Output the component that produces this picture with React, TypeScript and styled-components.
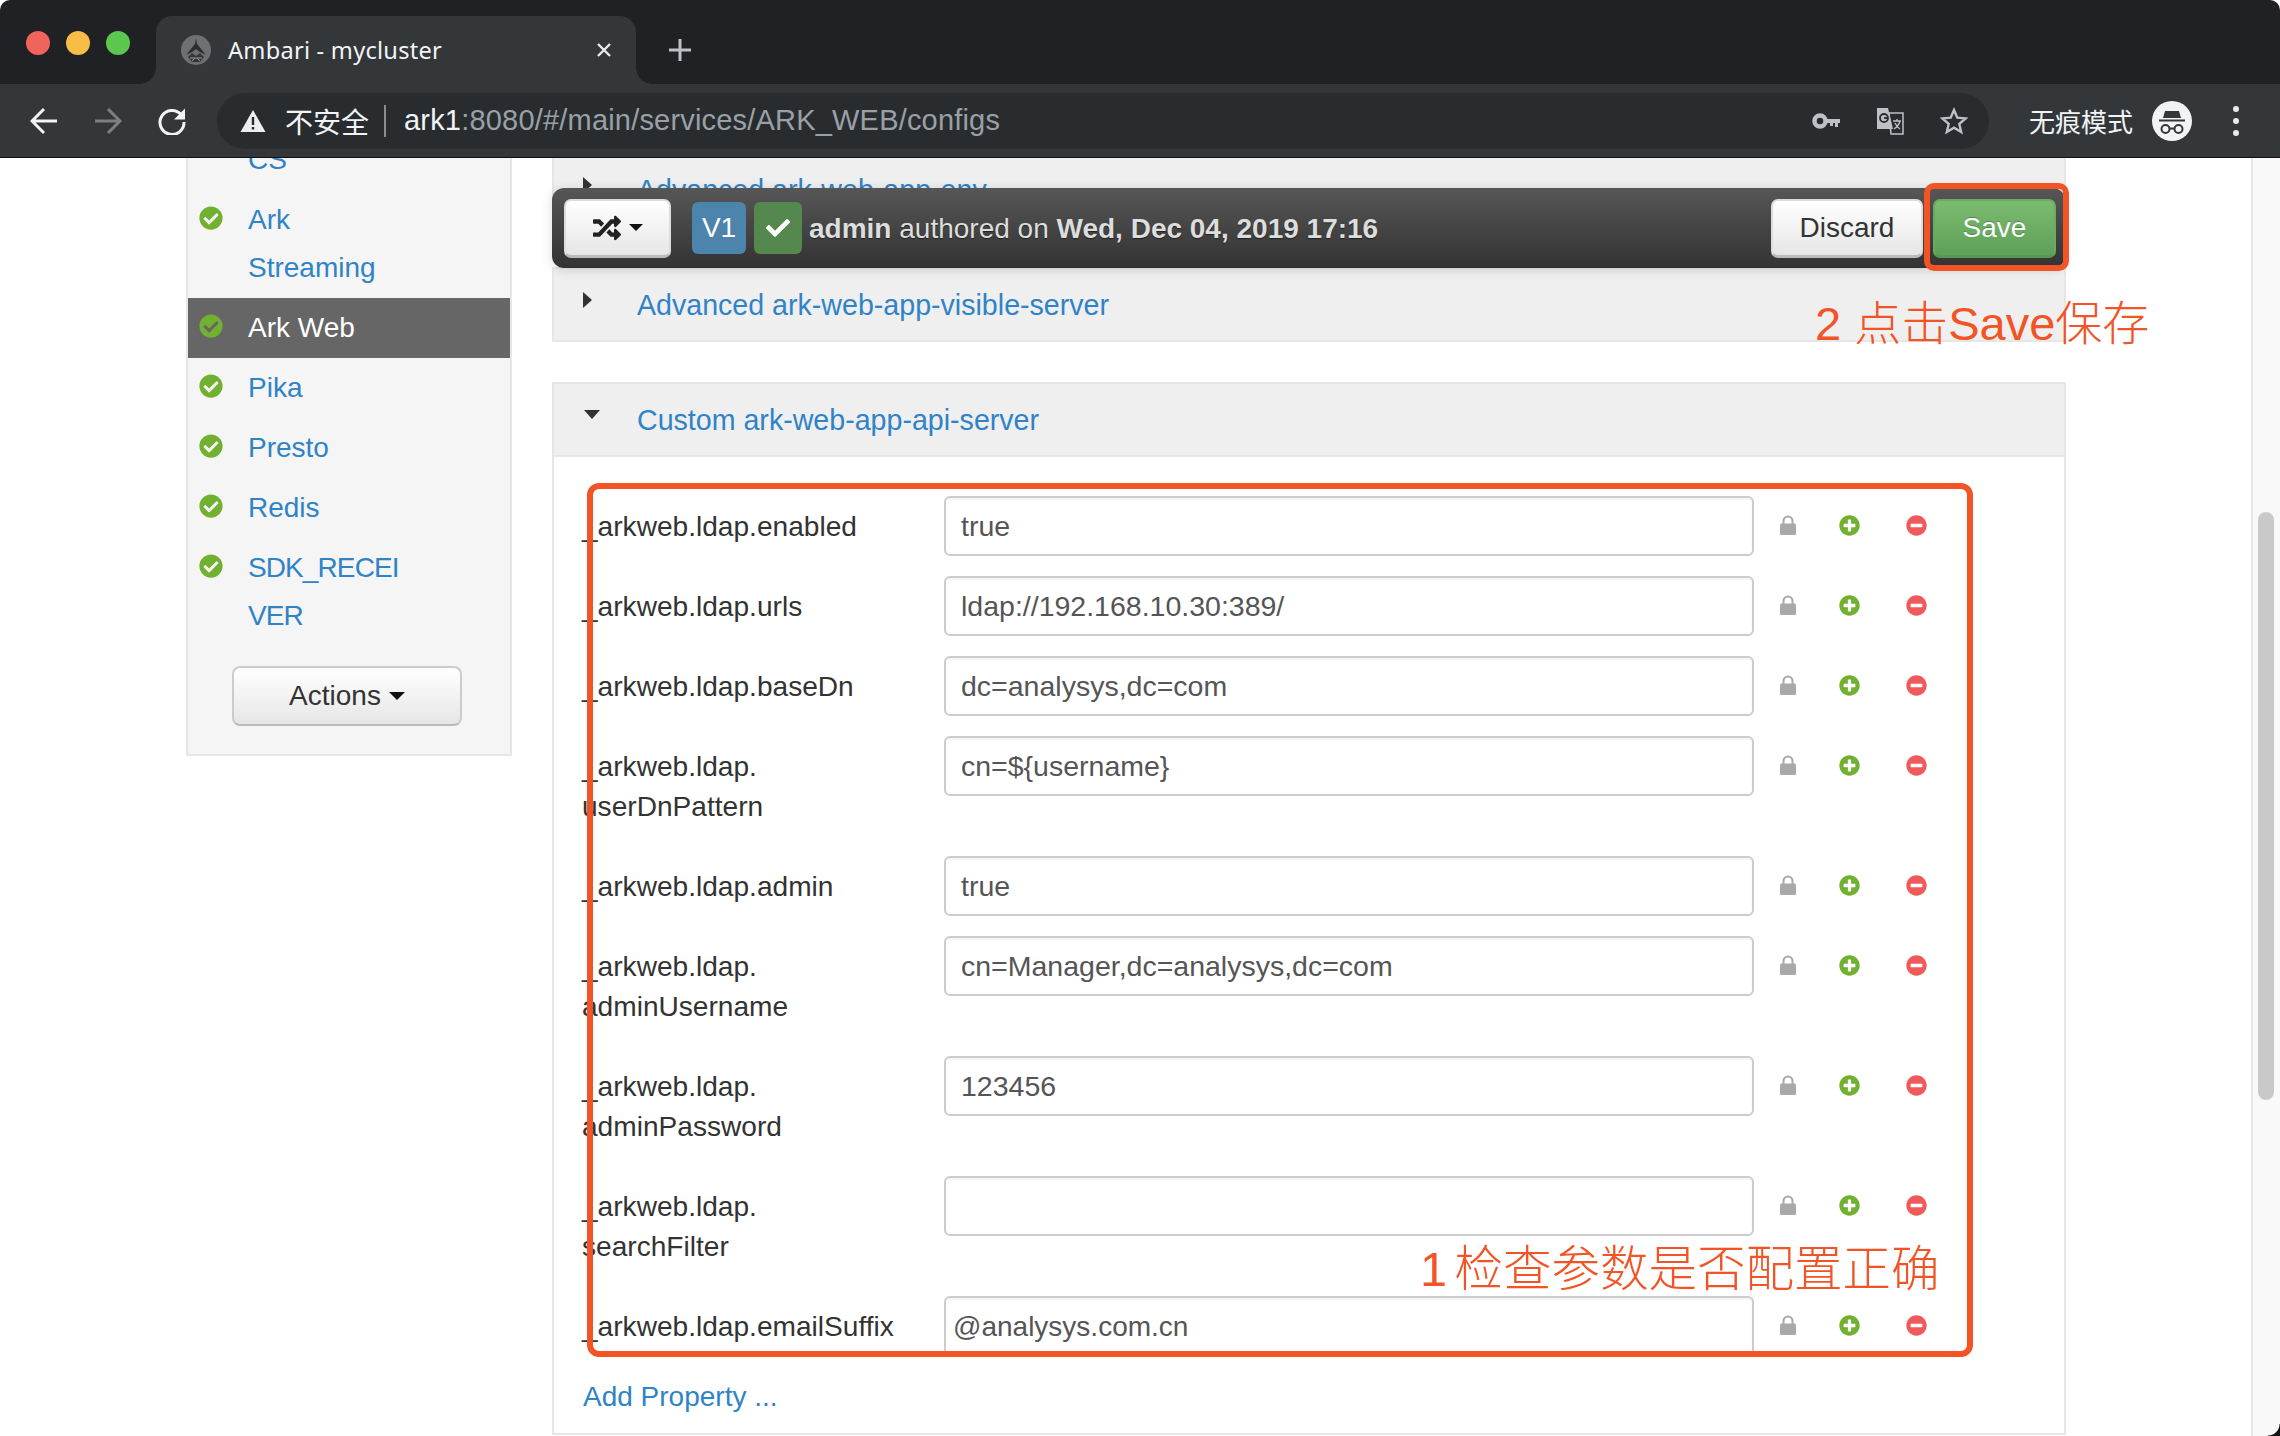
import React from "react";
import styled, { createGlobalStyle } from "styled-components";
import { FaRandom, FaCheck, FaPlusCircle, FaMinusCircle, FaCheckCircle } from "react-icons/fa";

const Global = createGlobalStyle`
  html, body { margin: 0; padding: 0; background: #fff; }
  body { width: 2280px; height: 1436px; overflow: hidden; font-family: "Liberation Sans", "Noto Sans CJK SC", Arial, sans-serif; }
  * { box-sizing: border-box; }
`;

const ACCENT = "#f25426";
const LINK = "#3083c6";
const CJK = `"Liberation Sans", "Noto Sans CJK SC", sans-serif`;

const Window = styled.div`
  position: relative; width: 2280px; height: 1436px; display: flex; flex-direction: column;
  overflow: hidden; border-radius: 10px 10px 0 0; background: #fff;
`;
const BottomCorner = styled.div`
  position: absolute; right: 0; bottom: 0; width: 12px; height: 12px;
  background: radial-gradient(circle at 0 0, transparent 11px, #111 12px);
`;
const TabStrip = styled.div`
  height: 84px; background: #202124; display: flex; align-items: flex-end; flex: none;
`;
const Lights = styled.div`
  width: 156px; height: 84px; padding: 31px 0 0 26px; display: flex; gap: 16px; flex: none;
`;
const Light = styled.span<{ $c: string }>`
  width: 24px; height: 24px; border-radius: 50%; background: ${(p) => p.$c};
`;
const Tab = styled.div`
  position: relative; width: 480px; height: 68px; flex: none; background: #33373a;
  border-radius: 16px 16px 0 0; display: flex; align-items: center; padding: 0 24px 0 25px; color: #f1f3f4;
  &::before, &::after { content: ""; position: absolute; bottom: 0; width: 16px; height: 16px; }
  &::before { left: -16px; background: radial-gradient(circle at 0 0, #202124 15.5px, #33373a 16px); }
  &::after { right: -16px; background: radial-gradient(circle at 100% 0, #202124 15.5px, #33373a 16px); }
`;
const TabTitle = styled.span`
  margin-left: 17px; flex: 1; white-space: nowrap; letter-spacing: 0.25px;
  font-family: "Noto Sans", "Liberation Sans", sans-serif; font-size: 23.6px;
`;
const NewTab = styled.span`
  margin-left: 32px; margin-bottom: 22px; width: 24px; height: 24px; display: flex;
`;
const Toolbar = styled.div`
  height: 74px; flex: none; background: #33373a; border-bottom: 1px solid #111;
  display: flex; align-items: center; padding-left: 12px; color: #fff;
`;
const NavButton = styled.span`
  width: 64px; height: 40px; display: flex; align-items: center; justify-content: center; flex: none;
`;
const Omnibox = styled.div`
  margin-left: 13px; width: 1772px; height: 56px; border-radius: 28px; background: #292c2f; flex: none;
  display: flex; align-items: center; padding-left: 23px; padding-right: 21px;
`;
const Insecure = styled.span`
  font-size: 28px; color: #f1f3f4; margin-left: 19px; font-family: ${CJK}; white-space: nowrap;
`;
const UrlDivider = styled.span`
  width: 2px; height: 32px; background: #8a8d90; margin: 0 18px 0 15px; flex: none;
`;
const Url = styled.span`
  font-size: 29px; color: #9aa0a6; flex: 1; white-space: nowrap; letter-spacing: 0.19px;
`;
const UrlHost = styled.span`color: #f1f3f4;`;
const OmniIcons = styled.div`
  display: flex; align-items: center; gap: 36px;
`;
const Incognito = styled.span`
  font-size: 26px; margin-left: 40px; color: #f1f3f4; white-space: nowrap; font-family: ${CJK}; width: 104px; flex: none;
`;
const IncognitoBadge = styled.span`
  width: 40px; height: 40px; margin-left: 19px; flex: none; display: flex;
`;
const MenuDots = styled.span`
  width: 8px; height: 32px; margin-left: 40px; flex: none; display: flex;
`;

const Page = styled.div`
  flex: 1; min-height: 0; display: flex; overflow: hidden; position: relative;
`;
const PageBody = styled.div`
  flex: 1; min-width: 0; padding-left: 186px; display: flex; gap: 40px; align-items: flex-start;
`;
const Sidebar = styled.aside`
  width: 326px; margin-top: -28px; flex: none; background: #f5f5f5;
  border: 2px solid #e6e6e6; border-top: 0; padding-bottom: 28px;
`;
const ServiceItem = styled.div<{ $active?: boolean }>`
  display: flex; padding: 6px 0 6px 11px; gap: 25px;
  background: ${(p) => (p.$active ? "#666" : "transparent")};
`;
const StatusIcon = styled.span`
  flex: none; margin-top: 10px; height: 24px; display: flex; color: #72b02f;
`;
const ServiceName = styled.a<{ $active?: boolean; $tight?: boolean }>`
  font-size: 28px; line-height: 48px; color: ${(p) => (p.$active ? "#fff" : LINK)};
  letter-spacing: ${(p) => (p.$tight ? "-0.9px" : "0")};
`;
const ActionsButton = styled.div`
  margin: 20px 0 0 44px; width: 230px; height: 60px; border: 2px solid #ccc; border-bottom-color: #bbb;
  border-radius: 8px; background: linear-gradient(#fff, #e6e6e6); font-size: 28px; color: #333;
  display: flex; align-items: center; justify-content: center; gap: 8px;
`;
const Caret = styled.span<{ $s?: number }>`
  width: 0; height: 0; border-left: ${(p) => p.$s ?? 8}px solid transparent; border-right: ${(p) => p.$s ?? 8}px solid transparent;
  border-top: ${(p) => p.$s ?? 8}px solid #111;
`;

const Main = styled.main`
  width: 1514px; margin-top: -6px; flex: none; display: flex; flex-direction: column; gap: 40px;
`;
const Panel = styled.section`
  border: 2px solid #e6e6e6; background: #fff;
`;
const PanelHeader = styled.div`
  height: 71px; background: #efefef; display: flex; align-items: center; padding: 2px 0 0 29px;
`;
const PanelHeaderOpen = styled(PanelHeader)`
  border-bottom: 2px solid #e6e6e6; height: 73px;
`;
const ArrowSlot = styled.span`
  width: 54px; flex: none; display: flex; align-items: center; height: 24px; margin-top: -12px;
`;
const ArrowRight = styled.span`
  width: 0; height: 0; border-top: 8px solid transparent; border-bottom: 8px solid transparent; border-left: 9px solid #333;
`;
const ArrowDown = styled.span`
  width: 0; height: 0; border-left: 8px solid transparent; border-right: 8px solid transparent; border-top: 9px solid #333; margin-left: 1px;
`;
const PanelTitle = styled.a`
  font-size: 28.6px; color: ${LINK}; white-space: nowrap;
`;
const PanelBody = styled.div`
  padding: 39px 0 16px 29px; display: flex; flex-direction: column;
`;
const PropertyRow = styled.div`
  display: flex; margin-bottom: 20px; min-height: 60px;
`;
const LastRow = styled(PropertyRow)`
  margin-bottom: 21px;
`;
const PropertyName = styled.label`
  width: 361px; flex: none; font-size: 28.1px; line-height: 40px; color: #333; padding: 11px 0 9px; margin-left: -1px; margin-right: 1px;
`;
const FieldBox = styled.div`
  width: 810px; height: 60px; flex: none; border: 2px solid #ccc; border-radius: 6px; background: #fff;
  box-shadow: inset 0 2px 2px rgba(0,0,0,.05); font-size: 28.5px; color: #555; display: flex; align-items: center; padding: 1px 0 0 15px;
`;
const ClippedField = styled(FieldBox)`
  height: 56px; border-bottom: 0; border-radius: 6px 6px 0 0; padding: 4px 0 0 7px; font-size: 28px;
`;
const RowActions = styled.div`
  display: flex; align-items: center; height: 58px; margin-left: 26px;
`;
const LockIcon = styled.span`
  display: flex; width: 16px; justify-content: center;
`;
const AddIcon = styled.span`
  display: flex; color: #72b02f; margin: 0 46px 0 43px;
`;
const RemoveIcon = styled.span`
  display: flex; color: #ef5b5b;
`;
const AddProperty = styled.a`
  font-size: 28px; line-height: 40px; color: ${LINK};
`;

const ConfigBar = styled.div`
  position: absolute; left: 552px; top: 30px; width: 1513px; height: 80px; border-radius: 12px;
  background: linear-gradient(#565656, #333); box-shadow: 0 2px 12px rgba(0,0,0,.14);
  display: flex; align-items: center; padding: 0 9px 0 12px;
`;
const BarButton = styled.div`
  height: 59px; border: 2px solid #ddd; border-bottom: 3px solid #bbb; border-radius: 7px;
  background: linear-gradient(#fff, #e6e6e6); color: #333; font-size: 28px;
  display: flex; align-items: center; justify-content: center; flex: none;
`;
const ShuffleButton = styled(BarButton)`
  width: 107px; gap: 8px; color: #222;
`;
const DiscardButton = styled(BarButton)`
  width: 152px; margin-left: auto;
`;
const SaveButton = styled(BarButton)`
  width: 123px; margin-left: 10px; color: #fff; border: 2px solid #6bab60; border-bottom: 3px solid #5c9554;
  background: linear-gradient(#7cbc71, #5da057); text-shadow: 0 -1px 0 rgba(0,0,0,.25);
`;
const VersionTag = styled.span`
  width: 54px; height: 52px; margin-left: 21px; border-radius: 6px; background: #4d84ac; color: #fff;
  font-size: 28px; display: flex; align-items: center; justify-content: center; flex: none;
`;
const CurrentTag = styled.span`
  width: 48px; height: 52px; margin-left: 8px; border-radius: 6px; background: #55884f; color: #fff;
  display: flex; align-items: center; justify-content: center; flex: none;
`;
const Authored = styled.span`
  margin: 1px 0 0 7px; font-size: 28px; color: #ddd; white-space: nowrap; text-shadow: 0 1px 1px rgba(0,0,0,.5);
`;
const SaveHighlight = styled.div`
  position: absolute; left: 1924px; top: 183px; width: 145px; height: 88px; border: 6px solid ${ACCENT}; border-radius: 10px; pointer-events: none;
`;
const ParamHighlight = styled.div`
  position: absolute; left: 587px; top: 483px; width: 1386px; height: 874px; border: 6px solid ${ACCENT}; border-radius: 12px; pointer-events: none;
`;
const SaveNote = styled.div`
  position: absolute; left: 1815px; top: 296px; font-size: 47px; line-height: 56px; color: ${ACCENT};
  font-family: ${CJK}; font-weight: 300; white-space: nowrap;
`;
const ParamNote = styled.div`
  position: absolute; left: 1420px; top: 1240px; font-size: 48.5px; line-height: 58px; color: ${ACCENT};
  font-family: ${CJK}; font-weight: 300; white-space: nowrap; word-spacing: -6px;
`;
const ScrollTrack = styled.div`
  width: 29px; flex: none; background: #f9f9f9; border-left: 2px solid #e8e8e8; padding: 354px 6px 0 5px;
`;
const ScrollThumb = styled.div`
  height: 588px; background: #c9c9c9; border-radius: 8px;
`;

const AmbariLogo = () => (
  <svg width="30" height="30" viewBox="0 0 30 30" style={{ flex: "none" }}>
    <circle cx="15" cy="15" r="15" fill="#6f7072" />
    <path d="M15 3l1 6 9 11-6-3-4-3-4 3-6 3 9-11z" fill="#2c2d2f" />
    <path d="M7 22l4-4 4 3 4-3 4 4-4 5h-8z" fill="#35363a" />
    <path d="M9 23h12M11 26l3-3M19 26l-3-3" stroke="#9a9b9d" strokeWidth="1" fill="none" />
  </svg>
);
const CloseGlyph = () => (
  <svg width="16" height="16" viewBox="0 0 16 16"><path d="M2 2l12 12M14 2L2 14" stroke="#e8eaed" strokeWidth="2.4" /></svg>
);
const PlusGlyph = () => (
  <svg width="24" height="24" viewBox="0 0 24 24"><path d="M12 1v22M1 12h22" stroke="#bdc1c6" strokeWidth="3" /></svg>
);
const BackGlyph = () => (
  <svg width="28" height="28" viewBox="0 0 28 28" fill="none" stroke="#f1f3f4" strokeWidth="3"><path d="M27 14H3M14 2L2 14l12 12" /></svg>
);
const ForwardGlyph = () => (
  <svg width="28" height="28" viewBox="0 0 28 28" fill="none" stroke="#7d8083" strokeWidth="3"><path d="M1 14h24M14 2l12 12-12 12" /></svg>
);
const ReloadGlyph = () => (
  <svg width="28" height="28" viewBox="0 0 28 28" fill="none">
    <path d="M23 7.5A12 12 0 1 0 26 15" stroke="#f1f3f4" strokeWidth="3" />
    <path d="M27 1.500v11H16z" fill="#f1f3f4" />
  </svg>
);
const WarnGlyph = () => (
  <svg width="26" height="24" viewBox="0 0 26 24" style={{ flex: "none" }}>
    <path d="M13 1l12.500 22H.5z" fill="#eceeef" />
    <path d="M11.800 8h2.400v8h-2.400zM11.800 18h2.400v2.500h-2.400z" fill="#292c2f" />
  </svg>
);
const KeyGlyph = () => (
  <svg width="28" height="16" viewBox="0 0 28 16">
    <circle cx="8" cy="8" r="5.500" fill="none" stroke="#bdc1c6" strokeWidth="4.500" />
    <path d="M14 6h14v4h-2v4h-3v-4h-2v3h-3v-3h-4z" fill="#bdc1c6" />
  </svg>
);
const TranslateGlyph = () => (
  <svg width="28" height="28" viewBox="0 0 28 28">
    <path d="M13 6h14v21H15z" fill="#292c2f" stroke="#bdc1c6" strokeWidth="1.500" />
    <path d="M1 1h11l5 21H1z" fill="#bdc1c6" />
    <circle cx="8" cy="11" r="4" fill="none" stroke="#292c2f" strokeWidth="1.800" />
    <path d="M8 11h4" stroke="#292c2f" strokeWidth="1.800" />
    <path d="M17 14h8M21 12v2M24 14c-1 4-3 6-6 8M19 16c1 2 3 5 5 6" fill="none" stroke="#bdc1c6" strokeWidth="1.300" />
  </svg>
);
const StarGlyph = () => (
  <svg width="28" height="28" viewBox="0 0 28 28">
    <path d="M14 3l3.300 7.700 8.300.7-6.300 5.500 1.900 8.100L14 20.700 6.800 25l1.900-8.100L2.400 11.400l8.300-.7z" fill="none" stroke="#bdc1c6" strokeWidth="2.400" />
  </svg>
);
const IncognitoGlyph = () => (
  <svg width="40" height="40" viewBox="0 0 40 40">
    <circle cx="20" cy="20" r="20" fill="#f1f3f4" />
    <path d="M13 10h14l2 7H11z" fill="#35363a" />
    <path d="M7 18.500h26v2H7z" fill="#35363a" />
    <circle cx="13.500" cy="28" r="4" fill="none" stroke="#35363a" strokeWidth="2" />
    <circle cx="26.500" cy="28" r="4" fill="none" stroke="#35363a" strokeWidth="2" />
    <path d="M17.500 27.500h5" stroke="#35363a" strokeWidth="2" />
  </svg>
);
const DotsGlyph = () => (
  <svg width="8" height="32" viewBox="0 0 8 32">
    <circle cx="4" cy="4" r="3" fill="#e8eaed" />
    <circle cx="4" cy="16" r="3" fill="#e8eaed" />
    <circle cx="4" cy="28" r="3" fill="#e8eaed" />
  </svg>
);
const LockGlyph = () => (
  <svg width="16" height="20" viewBox="0 0 16 20">
    <path d="M3.500 10V6a4.500 4.500 0 0 1 9 0v4" fill="none" stroke="#a9a9a9" strokeWidth="2" />
    <rect x="0" y="8.500" width="16" height="11.500" rx="1.500" fill="#a9a9a9" />
  </svg>
);

const services: { lines: string[]; active?: boolean; noIcon?: boolean; tight?: boolean }[] = [
  { lines: ["CS"], noIcon: true },
  { lines: ["Ark", "Streaming"] },
  { lines: ["Ark Web"], active: true },
  { lines: ["Pika"] },
  { lines: ["Presto"] },
  { lines: ["Redis"] },
  { lines: ["SDK_RECEI", "VER"], tight: true },
];

const properties: { name: string[]; value: string }[] = [
  { name: ["_arkweb.ldap.enabled"], value: "true" },
  { name: ["_arkweb.ldap.urls"], value: "ldap://192.168.10.30:389/" },
  { name: ["_arkweb.ldap.baseDn"], value: "dc=analysys,dc=com" },
  { name: ["_arkweb.ldap.", "userDnPattern"], value: "cn=${username}" },
  { name: ["_arkweb.ldap.admin"], value: "true" },
  { name: ["_arkweb.ldap.", "adminUsername"], value: "cn=Manager,dc=analysys,dc=com" },
  { name: ["_arkweb.ldap.", "adminPassword"], value: "123456" },
  { name: ["_arkweb.ldap.", "searchFilter"], value: "" },
];

const Lines = ({ lines }: { lines: string[] }) => (
  <>
    {lines.map((l, i) => (
      <React.Fragment key={l}>
        {i > 0 && <br />}
        {l}
      </React.Fragment>
    ))}
  </>
);

const Actions = () => (
  <RowActions>
    <LockIcon><LockGlyph /></LockIcon>
    <AddIcon><FaPlusCircle size={21} /></AddIcon>
    <RemoveIcon><FaMinusCircle size={21} /></RemoveIcon>
  </RowActions>
);

export default function App() {
  return (
    <Window>
      <Global />
      <TabStrip>
        <Lights>
          <Light $c="#f1645c" />
          <Light $c="#f8bd47" />
          <Light $c="#5cc74f" />
        </Lights>
        <Tab>
          <AmbariLogo />
          <TabTitle>Ambari - mycluster</TabTitle>
          <CloseGlyph />
        </Tab>
        <NewTab><PlusGlyph /></NewTab>
      </TabStrip>
      <Toolbar>
        <NavButton><BackGlyph /></NavButton>
        <NavButton><ForwardGlyph /></NavButton>
        <NavButton><ReloadGlyph /></NavButton>
        <Omnibox>
          <WarnGlyph />
          <Insecure>不安全</Insecure>
          <UrlDivider />
          <Url><UrlHost>ark1</UrlHost>:8080/#/main/services/ARK_WEB/configs</Url>
          <OmniIcons>
            <KeyGlyph />
            <TranslateGlyph />
            <StarGlyph />
          </OmniIcons>
        </Omnibox>
        <Incognito>无痕模式</Incognito>
        <IncognitoBadge><IncognitoGlyph /></IncognitoBadge>
        <MenuDots><DotsGlyph /></MenuDots>
      </Toolbar>
      <Page>
        <PageBody>
          <Sidebar>
            {services.map((s) => (
              <ServiceItem key={s.lines[0]} $active={s.active}>
                <StatusIcon>
                  <FaCheckCircle size={24} style={s.noIcon ? { visibility: "hidden" } : undefined} />
                </StatusIcon>
                <ServiceName $active={s.active} $tight={s.tight}><Lines lines={s.lines} /></ServiceName>
              </ServiceItem>
            ))}
            <ActionsButton>Actions <Caret /></ActionsButton>
          </Sidebar>
          <Main>
            <Panel>
              <PanelHeader>
                <ArrowSlot><ArrowRight /></ArrowSlot>
                <PanelTitle>Advanced ark-web-app-env</PanelTitle>
              </PanelHeader>
            </Panel>
            <Panel>
              <PanelHeader>
                <ArrowSlot><ArrowRight /></ArrowSlot>
                <PanelTitle>Advanced ark-web-app-visible-server</PanelTitle>
              </PanelHeader>
            </Panel>
            <Panel>
              <PanelHeaderOpen>
                <ArrowSlot><ArrowDown /></ArrowSlot>
                <PanelTitle>Custom ark-web-app-api-server</PanelTitle>
              </PanelHeaderOpen>
              <PanelBody>
                {properties.map((p) => (
                  <PropertyRow key={p.name.join("")}>
                    <PropertyName><Lines lines={p.name} /></PropertyName>
                    <FieldBox>{p.value}</FieldBox>
                    <Actions />
                  </PropertyRow>
                ))}
                <LastRow>
                  <PropertyName>_arkweb.ldap.emailSuffix</PropertyName>
                  <ClippedField>@analysys.com.cn</ClippedField>
                  <Actions />
                </LastRow>
                <AddProperty>Add Property ...</AddProperty>
              </PanelBody>
            </Panel>
          </Main>
        </PageBody>
        <ScrollTrack><ScrollThumb /></ScrollTrack>
        <ConfigBar>
          <ShuffleButton><FaRandom size={28} /><Caret $s={7} /></ShuffleButton>
          <VersionTag>V1</VersionTag>
          <CurrentTag><FaCheck size={24} /></CurrentTag>
          <Authored><b>admin</b> authored on <b>Wed, Dec 04, 2019 17:16</b></Authored>
          <DiscardButton>Discard</DiscardButton>
          <SaveButton>Save</SaveButton>
        </ConfigBar>
      </Page>
      <SaveHighlight />
      <ParamHighlight />
      <SaveNote>2 点击Save保存</SaveNote>
      <ParamNote>1 检查参数是否配置正确</ParamNote>
      <BottomCorner />
    </Window>
  );
}
